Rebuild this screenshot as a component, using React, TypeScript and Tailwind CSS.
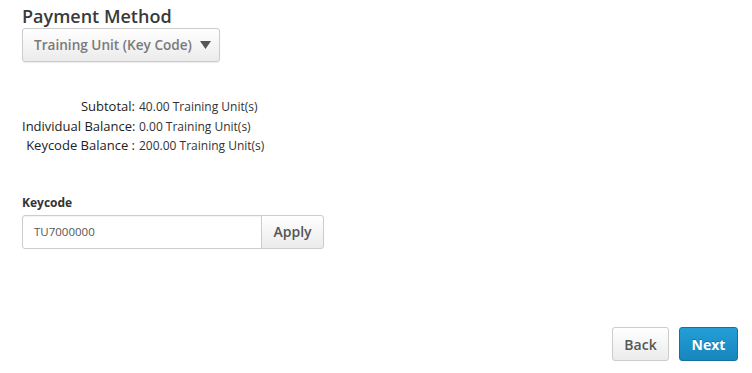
export default function App() {
  const font = { fontFamily: '"Open Sans", "Noto Sans", sans-serif' };
  return (
    <div className="w-[752px] h-[373px] bg-white relative overflow-hidden text-[#333]" style={font}>
      <div className="pl-[22px] pt-[4px]">
        <h2 className="text-[18px] leading-[24px] font-semibold text-[#3a3a3a]">Payment Method</h2>
        <button className="h-[34px] w-[198px] flex items-center justify-between pl-[11px] pr-[8px] rounded-[3px] border border-[#ccc] bg-gradient-to-b from-white to-[#ebebeb] text-[13.6px] font-semibold text-[#7a7a7a] shadow-[0_1px_1px_rgba(0,0,0,0.08)]">
          <span className="whitespace-nowrap">Training Unit (Key Code)</span>
          <svg width="11" height="8" viewBox="0 0 11 8" className="shrink-0"><path d="M0 0 L11 0 L5.5 8 Z" fill="#555" /></svg>
        </button>
        <div className="mt-[35px] text-[12px] leading-[19.5px] text-[#333]">
          <div className="flex items-baseline whitespace-nowrap"><span className="w-[113px] shrink-0 text-right text-[13px] text-[#222]">Subtotal:</span><span className="ml-[4px]">40.00 Training Unit(s)</span></div>
          <div className="flex items-baseline whitespace-nowrap"><span className="w-[113px] shrink-0 text-right text-[13px] text-[#222]">Individual Balance:</span><span className="ml-[4px]">0.00 Training Unit(s)</span></div>
          <div className="flex items-baseline whitespace-nowrap"><span className="w-[113px] shrink-0 text-right text-[13px] text-[#222]">Keycode Balance :</span><span className="ml-[4px]">200.00 Training Unit(s)</span></div>
        </div>
        <div className="mt-[38px] text-[12px] font-bold leading-[18px]">Keycode</div>
        <div className="flex mt-[3px]">
          <div className="w-[240px] h-[34px] border border-[#ccc] rounded-l-[3px] flex items-center pl-[11px] text-[11.5px] text-[#555] shadow-[inset_0_1px_1px_rgba(0,0,0,0.05)]">TU7000000</div>
          <button className="h-[34px] w-[63px] -ml-px border border-[#ccc] rounded-r-[3px] bg-gradient-to-b from-white to-[#ebebeb] text-[14px] font-semibold text-[#555]">Apply</button>
        </div>
      </div>
      <div className="absolute right-[14px] bottom-[12px] flex gap-[10px]">
        <button className="h-[34px] w-[57px] border border-[#ccc] rounded-[3px] bg-gradient-to-b from-white to-[#ebebeb] text-[14px] font-semibold text-[#555]">Back</button>
        <button className="h-[34px] w-[59px] border border-[#13739f] rounded-[3px] bg-gradient-to-b from-[#239ed6] to-[#1786bd] text-[14px] font-bold text-white [text-shadow:0_-1px_0_rgba(0,0,0,0.25)]">Next</button>
      </div>
    </div>
  );
}
